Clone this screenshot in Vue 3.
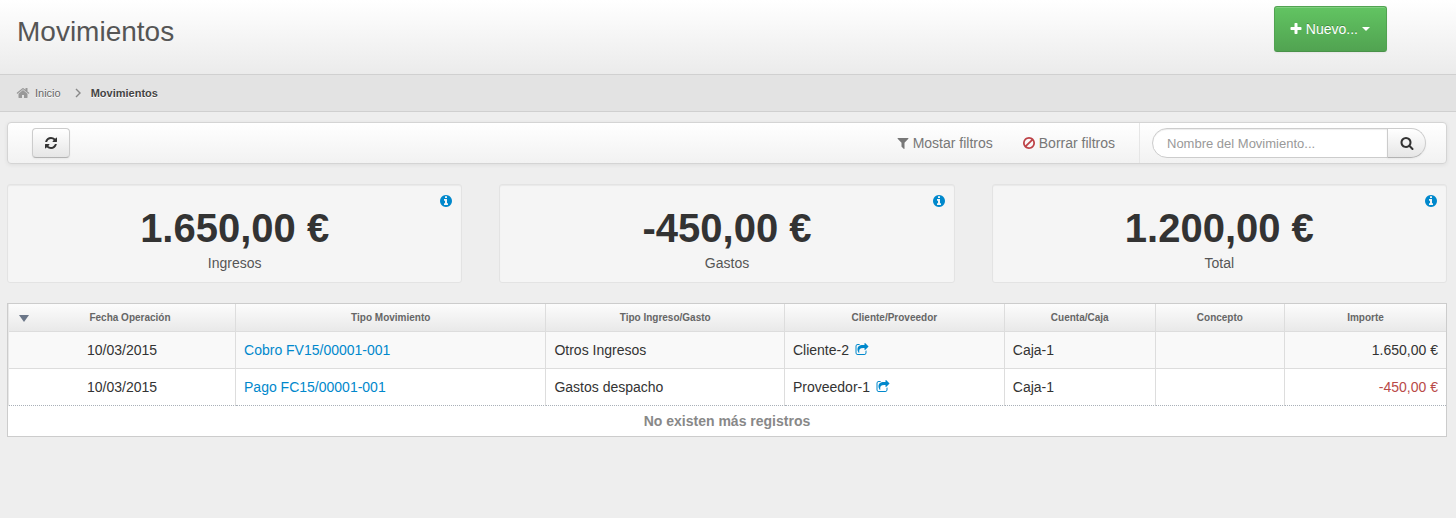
<script setup>
import { ref } from 'vue';

const search = ref('');

const icons = {
  plus: 'M1600 736v192q0 40-28 68t-68 28h-416v416q0 40-28 68t-68 28h-192q-40 0-68-28t-28-68v-416h-416q-40 0-68-28t-28-68v-192q0-40 28-68t68-28h416v-416q0-40 28-68t68-28h192q40 0 68 28t28 68v416h416q40 0 68 28t28 68z',
  home: 'M1472 992v480q0 26-19 45t-45 19h-384v-384h-256v384h-384q-26 0-45-19t-19-45v-480q0-1 .5-3t.5-3l575-474 575 474q1 2 1 6zm223-69l-62 74q-8 9-21 11h-3q-13 0-21-7l-692-577-692 577q-12 8-24 7-13-2-21-11l-62-74q-8-10-7-23.5t11-21.5l719-599q32-26 76-26t76 26l244 204v-195q0-14 9-23t23-9h192q14 0 23 9t9 23v408l219 182q10 8 11 21.5t-7 23.5z',
  refresh: 'M1639 1056q0 5-1 7-64 268-268 434.5t-478 166.5q-146 0-282.5-55t-243.5-157l-129 129q-19 19-45 19t-45-19-19-45v-448q0-26 19-45t45-19h448q26 0 45 19t19 45-19 45l-137 137q71 66 161 102t187 36q134 0 250-65t186-179q11-17 53-117 8-23 30-23h192q13 0 22.5 9.5t9.5 22.5zm25-800v448q0 26-19 45t-45 19h-448q-26 0-45-19t-19-45 19-45l138-138q-148-137-349-137-134 0-250 65t-186 179q-11 17-53 117-8 23-30 23h-199q-13 0-22.5-9.5t-9.5-22.5v-7q65-268 270-434.5t480-166.5q146 0 284 55.5t245 156.5l130-129q19-19 45-19t45 19 19 45z',
  filter: 'M1595 295q17 41-14 70l-493 493v742q0 42-39 59-13 5-25 5-27 0-45-19l-256-256q-19-19-19-45v-486l-493-493q-31-29-14-70 17-39 59-39h1280q42 0 59 39z',
  ban: 'M1440 893q0-161-87-295l-754 753q137 89 297 89 111 0 211.5-43.5t173.5-116.5 116-174.5 43-212.5zm-999 299l755-754q-135-91-300-91-148 0-273 73t-198 199-73 274q0 162 89 299zm1223-299q0 157-61 300t-163.5 246-245 164-298.5 61-298.5-61-245-164-163.5-246-61-300 61-299.5 163.5-245.5 245-164 298.5-61 298.5 61 245 164 163.5 245.5 61 299.5z',
  search: 'M1216 832q0-185-131.5-316.5t-316.5-131.5-316.5 131.5-131.5 316.5 131.5 316.5 316.5 131.5 316.5-131.5 131.5-316.5zm512 832q0 52-38 90t-90 38q-54 0-90-38l-343-342q-179 124-399 124-143 0-273.5-55.5t-225-150-150-225-55.5-273.5 55.5-273.5 150-225 225-150 273.5-55.5 273.5 55.5 225 150 150 225 55.5 273.5q0 220-124 399l343 343q37 37 37 90z',
  info: 'M1152 1376v-160q0-14-9-23t-23-9h-96v-512q0-14-9-23t-23-9h-320q-14 0-23 9t-9 23v160q0 14 9 23t23 9h96v320h-96q-14 0-23 9t-9 23v160q0 14 9 23t23 9h448q14 0 23-9t9-23zm-128-896v-160q0-14-9-23t-23-9h-192q-14 0-23 9t-9 23v160q0 14 9 23t23 9h192q14 0 23-9t9-23zm640 416q0 209-103 385.5t-279.5 279.5-385.5 103-385.5-103-279.5-279.5-103-385.5 103-385.5 279.5-279.5 385.5-103 385.5 103 279.5 279.5 103 385.5z',
  share: 'M1472 989v259q0 119-84.5 203.5t-203.5 84.5h-832q-119 0-203.5-84.5t-84.5-203.5v-832q0-119 84.5-203.5t203.5-84.5h255q13 0 22.5 9.5t9.5 22.5q0 27-26 32-77 26-133 60-10 4-16 4h-112q-66 0-113 47t-47 113v832q0 66 47 113t113 47h832q66 0 113-47t47-113v-214q0-19 18-29 28-13 54-37 16-16 35-8 21 9 21 29zm237-496l-384 384q-18 19-45 19-12 0-25-5-39-17-39-59v-192h-160q-323 0-438 131-119 137-74 473 3 23-20 34-8 2-12 2-16 0-26-13-10-14-21-31t-39.5-68.5-49.5-99.5-38.5-114-17.5-122q0-49 3.5-91t14-90 28-88 47-81.5 68.5-74 94.5-61.5 124.5-48.5 159.5-30.5 196.5-11h160v-192q0-42 39-59 13-5 25-5 26 0 45 19l384 384q19 19 19 45t-19 45z'
};

const totals = [
  { label: 'Ingresos', amount: '1.650,00 €' },
  { label: 'Gastos', amount: '-450,00 €' },
  { label: 'Total', amount: '1.200,00 €' }
];

const movements = [
  {
    date: '10/03/2015',
    name: 'Cobro FV15/00001-001',
    type: 'Otros Ingresos',
    partner: 'Cliente-2',
    account: 'Caja-1',
    concept: '',
    amount: '1.650,00 €'
  },
  {
    date: '10/03/2015',
    name: 'Pago FC15/00001-001',
    type: 'Gastos despacho',
    partner: 'Proveedor-1',
    account: 'Caja-1',
    concept: '',
    amount: '-450,00 €'
  }
];
</script>

<template>
  <div class="page">
    <header class="page-header">
      <h1>Movimientos</h1>
      <button type="button" class="btn-new">
        <svg class="icon" viewBox="0 0 1792 1792"><path :d="icons.plus" /></svg>
        <span>Nuevo...</span>
        <span class="caret"></span>
      </button>
    </header>

    <nav class="breadcrumb">
      <a href="#" class="crumb">
        <svg class="icon" viewBox="0 0 1792 1792"><path :d="icons.home" /></svg>
        <span>Inicio</span>
      </a>
      <svg class="chevron" viewBox="0 0 6 10"><path d="M1 1l4 4-4 4" /></svg>
      <span class="current">Movimientos</span>
    </nav>

    <main class="content">
      <div class="toolbar">
        <button type="button" class="btn btn-refresh" aria-label="Actualizar">
          <svg class="icon" viewBox="0 0 1792 1792"><path :d="icons.refresh" /></svg>
        </button>
        <div class="filters">
          <a href="#" class="filter">
            <svg class="icon" viewBox="0 0 1792 1792"><path :d="icons.filter" /></svg>
            <span>Mostar filtros</span>
          </a>
          <a href="#" class="filter">
            <svg class="icon danger" viewBox="0 0 1792 1792"><path :d="icons.ban" /></svg>
            <span>Borrar filtros</span>
          </a>
        </div>
        <form class="search" @submit.prevent>
          <input
            v-model="search"
            type="text"
            aria-label="Nombre del Movimiento"
            placeholder="Nombre del Movimiento..."
          />
          <button type="submit" class="btn btn-search" aria-label="Buscar">
            <svg class="icon" viewBox="0 0 1792 1792"><path :d="icons.search" /></svg>
          </button>
        </form>
      </div>

      <div class="totals">
        <section v-for="total in totals" :key="total.label" class="total">
          <a href="#" class="info" :aria-label="total.label">
            <svg class="icon" viewBox="0 0 1792 1792"><path :d="icons.info" /></svg>
          </a>
          <strong>{{ total.amount }}</strong>
          <span>{{ total.label }}</span>
        </section>
      </div>

      <div class="grid">
        <table>
          <colgroup>
            <col class="col-date" />
            <col class="col-name" />
            <col class="col-type" />
            <col class="col-partner" />
            <col class="col-account" />
            <col class="col-concept" />
            <col />
          </colgroup>
          <thead>
            <tr>
              <th>
                <div class="sorted">
                  <span class="sort-arrow"></span>
                  <span class="sort-label">Fecha Operación</span>
                </div>
              </th>
              <th>Tipo Movimiento</th>
              <th>Tipo Ingreso/Gasto</th>
              <th>Cliente/Proveedor</th>
              <th>Cuenta/Caja</th>
              <th>Concepto</th>
              <th>Importe</th>
            </tr>
          </thead>
          <tbody>
            <tr v-for="movement in movements" :key="movement.name">
              <td class="date">{{ movement.date }}</td>
              <td><a href="#">{{ movement.name }}</a></td>
              <td>{{ movement.type }}</td>
              <td>
                <div class="partner">
                  <span>{{ movement.partner }}</span>
                  <a href="#" :aria-label="movement.partner">
                    <svg class="icon" viewBox="0 0 1792 1792"><path :d="icons.share" /></svg>
                  </a>
                </div>
              </td>
              <td>{{ movement.account }}</td>
              <td>{{ movement.concept }}</td>
              <td class="amount" :class="{ negative: movement.amount.startsWith('-') }">
                {{ movement.amount }}
              </td>
            </tr>
          </tbody>
        </table>
        <div class="no-more">No existen más registros</div>
      </div>
    </main>
  </div>
</template>

<style>
body {
  background: #eee;
}
</style>

<style scoped>
.page {
  font-family: "Liberation Sans", Arial, sans-serif;
  font-size: 14px;
  line-height: 20px;
  color: #333;
}

.page *,
.page {
  box-sizing: border-box;
}

a {
  color: #0088cc;
  text-decoration: none;
}

button,
input {
  font-family: inherit;
}

.icon {
  display: block;
  flex: none;
  width: 14px;
  height: 14px;
  fill: currentColor;
}

.page-header {
  display: flex;
  justify-content: space-between;
  align-items: flex-start;
  padding: 6px 69px 22px 17px;
  background: linear-gradient(#fff, #ebebeb);
}

h1 {
  margin: 0;
  padding-top: 6px;
  font-size: 28px;
  font-weight: normal;
  line-height: 40px;
  color: #555;
}

.btn-new {
  display: flex;
  align-items: center;
  gap: 3px;
  height: 46px;
  padding: 0 16px 0 14px;
  border: 1px solid #51a351;
  border-bottom-color: #499249;
  border-radius: 3px;
  background: linear-gradient(#62c462, #51a351);
  box-shadow: inset 0 1px 0 rgba(255, 255, 255, 0.2), 0 1px 2px rgba(0, 0, 0, 0.05);
  font-size: 14px;
  color: #fff;
  text-shadow: 0 -1px 0 rgba(0, 0, 0, 0.25);
  cursor: pointer;
}

.caret {
  margin-left: 1px;
  border-top: 4px solid #fff;
  border-right: 4px solid transparent;
  border-left: 4px solid transparent;
}

.breadcrumb {
  display: flex;
  align-items: center;
  height: 38px;
  padding: 0 16px;
  border-top: 1px solid #d0d0d0;
  border-bottom: 1px solid #d0d0d0;
  background: #e3e3e3;
  font-size: 11px;
  text-shadow: 0 1px 0 #fff;
}

.crumb {
  display: flex;
  align-items: center;
  gap: 5px;
  color: #666;
}

.crumb .icon {
  color: #999;
}

.chevron {
  width: 6px;
  height: 10px;
  margin: 0 10px 0 14px;
  fill: none;
  stroke: #888;
  stroke-width: 1.4;
}

.current {
  font-weight: bold;
  color: #444;
}

.content {
  padding: 10px 9px 20px 7px;
}

.toolbar {
  display: flex;
  align-items: center;
  height: 42px;
  padding: 0 20px 0 24px;
  border: 1px solid #d4d4d4;
  border-radius: 4px;
  background: linear-gradient(#fff, #f2f2f2);
  box-shadow: 0 1px 4px rgba(0, 0, 0, 0.07);
}

.btn {
  display: flex;
  align-items: center;
  justify-content: center;
  width: 38px;
  height: 30px;
  padding: 0;
  border: 1px solid #ccc;
  border-bottom-color: #b3b3b3;
  border-radius: 4px;
  background: linear-gradient(#fff, #e6e6e6);
  box-shadow: inset 0 1px 0 rgba(255, 255, 255, 0.2), 0 1px 2px rgba(0, 0, 0, 0.05);
  color: #333;
  cursor: pointer;
}

.filters {
  display: flex;
  gap: 29px;
  height: 100%;
  margin-left: auto;
  padding-right: 24px;
  border-right: 1px solid #e6e6e6;
}

.filter {
  display: flex;
  align-items: center;
  gap: 3px;
  color: #777;
}

.danger {
  color: #bd4247;
}

.search {
  display: flex;
  padding-left: 12px;
}

.search input {
  width: 236px;
  height: 30px;
  padding: 0 14px;
  border: 1px solid #ccc;
  border-radius: 15px 0 0 15px;
  outline: none;
  background: #fff;
  box-shadow: inset 0 1px 1px rgba(0, 0, 0, 0.075);
  font-size: 13px;
  color: #555;
}

.search input::placeholder {
  color: #999;
  opacity: 1;
}

.btn-search {
  width: 39px;
  margin-left: -1px;
  border-radius: 0 15px 15px 0;
}

.totals {
  display: grid;
  grid-template-columns: repeat(3, 1fr);
  gap: 37px;
  margin: 20px 0;
}

.total {
  position: relative;
  display: flex;
  flex-direction: column;
  align-items: center;
  padding: 23px 20px 9px;
  border: 1px solid #e3e3e3;
  border-radius: 3px;
  background: #f5f5f5;
  box-shadow: inset 0 1px 1px rgba(0, 0, 0, 0.05);
  color: #555;
}

.total strong {
  margin-bottom: 5px;
  font-size: 40px;
  line-height: 40px;
  color: #333;
}

.info {
  position: absolute;
  top: 9px;
  right: 8px;
}

.grid {
  border: 1px solid #ccc;
  background: #fff;
}

table {
  width: 100%;
  border-left: 1px solid #e8e8e8;
  border-collapse: separate;
  border-spacing: 0;
  table-layout: fixed;
}

.col-date {
  width: 15.8%;
}

.col-name {
  width: 21.6%;
}

.col-type {
  width: 16.6%;
}

.col-partner {
  width: 15.3%;
}

.col-account {
  width: 10.5%;
}

.col-concept {
  width: 9%;
}

th,
td {
  padding: 8px;
  border-right: 1px solid #ddd;
  border-bottom: 1px solid #ddd;
  text-align: left;
}

th:last-child,
td:last-child {
  border-right: 0;
}

th {
  padding: 5px 8px 4px;
  background: linear-gradient(#fcfcfc, #e9e9e9);
  font-size: 10px;
  line-height: 18px;
  text-align: center;
  color: #666;
}

.sorted {
  display: flex;
  align-items: center;
  gap: 4px;
}

.sort-arrow {
  margin-left: 2px;
  border-top: 7px solid #6b7688;
  border-right: 5px solid transparent;
  border-left: 5px solid transparent;
}

.sort-label {
  flex: 1;
}

tbody tr:first-child td {
  background: #f9f9f9;
}

tbody tr:last-child td {
  border-bottom: 1px dotted #a9b0b8;
}

.date {
  text-align: center;
}

.partner {
  display: flex;
  align-items: center;
  gap: 6px;
}

td.amount {
  text-align: right;
}

td.negative {
  color: #b94a48;
}

.no-more {
  padding: 5px;
  font-weight: bold;
  text-align: center;
  color: #888;
}
</style>
